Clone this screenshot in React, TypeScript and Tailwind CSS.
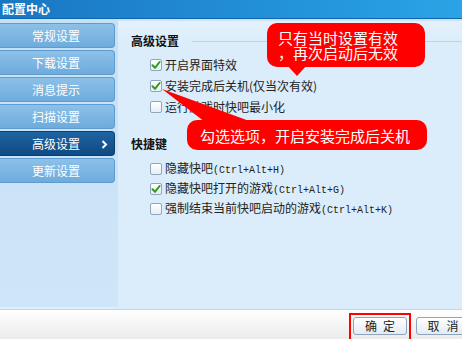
const font = { fontFamily: '"Noto Sans CJK SC", "Noto Sans", sans-serif' };

const menu = ["常规设置", "下载设置", "消息提示", "扫描设置", "高级设置", "更新设置"];

function CheckBox({ checked }: { checked?: boolean }) {
  return (
    <span className="w-[12px] h-[12px] shrink-0 rounded-[2px] border border-[#8fa6bd] bg-gradient-to-b from-white to-[#e8eef4] flex items-center justify-center">
      {checked && (
        <svg width="10" height="10" viewBox="0 0 10 10">
          <path d="M1.5 5.2 L4 7.8 L8.6 2" fill="none" stroke="#2f9a1f" strokeWidth="2" strokeLinecap="round" strokeLinejoin="round" />
        </svg>
      )}
    </span>
  );
}

function Option({ label, keys, checked, h }: { label: string; keys?: string; checked?: boolean; h: string }) {
  return (
    <div className={`flex items-center pl-[19px] ${h}`}>
      <CheckBox checked={checked} />
      <span className="ml-[3px] text-[12px] text-[#222] leading-none whitespace-nowrap">
        {label}
        {keys && <span className="text-[10px]" style={{ fontFamily: '"Liberation Mono", monospace' }}>{keys}</span>}
      </span>
    </div>
  );
}

function Heading({ text }: { text: string }) {
  return (
    <div className="flex items-center h-[14px]">
      <span className="text-[12px] font-bold text-[#111] leading-none">{text}</span>
      <div className="flex-1 h-px ml-[13px] bg-[#bcd3e8]" />
    </div>
  );
}

export default function App() {
  return (
    <div className="relative w-[462px] h-[339px] overflow-hidden flex flex-col bg-[#dcedfb]" style={font}>
      <div className="h-[19px] shrink-0 flex items-center pl-[2px] bg-gradient-to-r from-[#1a76c2] to-[#2aa4e6] border-b border-[#0d67b0]">
        <span className="text-white font-bold text-[12px] leading-none">配置中心</span>
      </div>

      <div className="flex-1 flex min-h-0">
        <div className="w-[118px] shrink-0 bg-gradient-to-b from-[#c6e0f6] to-[#cfe6f8] pt-[4px] flex flex-col gap-[2px] mb-[2px]">
          {menu.map((m) => {
            const active = m === "高级设置";
            return (
              <div
                key={m}
                className={`relative w-[115px] h-[25px] rounded-r-[4px] flex items-center pl-[32px] text-[12px] text-white leading-none border border-l-0 ${
                  active
                    ? "bg-gradient-to-b from-[#1f64a3] to-[#0f4a82] border-[#0c3f70]"
                    : "bg-gradient-to-b from-[#8cc1e8] to-[#6eabdc] border-[#5d9bd0]"
                }`}
              >
                {m}
                {active && (
                  <svg className="absolute left-[101px] top-[8px]" width="7" height="9" viewBox="0 0 7 9">
                    <path d="M1.5 1 L5 4.5 L1.5 8" fill="none" stroke="white" strokeWidth="2" />
                  </svg>
                )}
              </div>
            );
          })}
        </div>

        <div className="flex-1 pl-[13px] pt-[13px] bg-gradient-to-b from-[#e4f1fb] to-[#dbedfb] to-[8%] border-t-[2px] border-[#d0e2f1]">
          <Heading text="高级设置" />
          <div className="mt-[6px]">
            <Option label="开启界面特效" checked h="h-[21px]" />
            <Option label="安装完成后关机(仅当次有效)" checked h="h-[21px]" />
            <Option label="运行游戏时快吧最小化" h="h-[21px]" />
          </div>
          <div className="mt-[20px]">
            <div className="flex items-center h-[14px]">
              <span className="text-[12px] font-bold text-[#111] leading-none">快捷键</span>
            </div>
          </div>
          <div className="mt-[8px]">
            <Option label="隐藏快吧" keys="(Ctrl+Alt+H)" h="h-[20px]" />
            <Option label="隐藏快吧打开的游戏" keys="(Ctrl+Alt+G)" checked h="h-[20px]" />
            <Option label="强制结束当前快吧启动的游戏" keys="(Ctrl+Alt+K)" h="h-[20px]" />
          </div>
        </div>
      </div>

      <div className="h-[30px] shrink-0 border-t border-[#c3d5e6] bg-gradient-to-b from-white to-[#ebebeb] flex items-start pl-[349px] pt-[3px] gap-[5px]">
        <div className="border-2 border-[#ff0000] px-[2px] pt-[2px] h-[30px] shrink-0">
          <button className="w-[54px] h-[18px] rounded-[3px] border border-[#8ea5bd] bg-gradient-to-b from-white to-[#e3ebf3] flex items-center justify-center gap-[6px] text-[12px] leading-none text-[#222]">
            <span>确</span>
            <span>定</span>
          </button>
        </div>
        <button className="mt-[4px] w-[54px] h-[18px] shrink-0 rounded-[3px] border border-[#8ea5bd] bg-gradient-to-b from-white to-[#e3ebf3] flex items-center justify-center gap-[7px] text-[12px] leading-none text-[#222]">
          <span>取</span>
          <span>消</span>
        </button>
      </div>

      {/* annotations */}
      <svg className="absolute left-0 top-0 pointer-events-none" width="462" height="339">
        <polygon points="162,89 205,122 252,122" fill="#ff0000" />
        <polygon points="286,64 308,64 297,76" fill="#ff0000" />
      </svg>
      <div className="absolute left-[267px] top-[23px] w-[158px] h-[44px] rounded-[10px] bg-[#ff0000] pl-[11px] pt-[7px] text-white text-[15px] leading-[15px]">
        <div>只有当时设置有效</div>
        <div>，再次启动后无效</div>
      </div>
      <div className="absolute left-[187px] top-[120px] w-[240px] h-[30px] rounded-[10px] bg-[#ff0000] pl-[13px] flex items-center text-white text-[15px] leading-none whitespace-nowrap">
        勾选选项，开启安装完成后关机
      </div>
    </div>
  );
}
